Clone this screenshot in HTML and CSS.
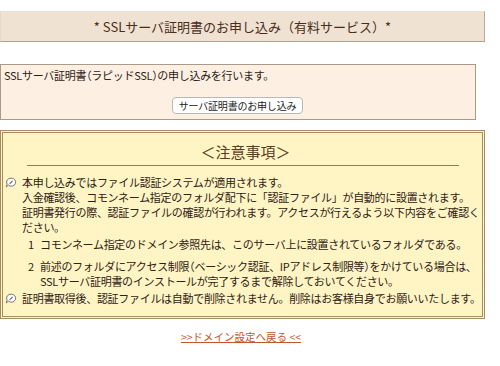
FILE: index.html
```html
<!DOCTYPE html>
<html lang="ja">
<head>
<meta charset="utf-8">
<link rel="stylesheet" href="styles.css">
</head>
<body>
<div class="page">
  <div class="title">* SSLサーバ証明書のお申し込み（有料サービス）*</div>

  <div class="intro">
    <p class="intro-text">SSLサーバ証明書<span class="paren">（</span>ラピッドSSL<span class="paren">）</span>の申し込みを行います。</p>
    <div class="intro-action"><button class="btn" type="button">サーバ証明書のお申し込み</button></div>
  </div>

  <div class="notice">
    <div class="notice-head">＜注意事項＞</div>
    <div class="rule"></div>
    <div class="item">
      <svg class="ico" viewBox="0 0 12 12" width="12" height="12"><path d="M6.5 1.2a4.3 4 0 1 1-3.1 6.9L1.2 10l.9-2.9A4.3 4 0 0 1 6.5 1.2z" fill="#fff" stroke="#777" stroke-width="1"/><path d="M4.6 6.8l3-3" stroke="#666" stroke-width="1.1"/></svg>
      <div class="item-text">本申し込みではファイル認証システムが適用されます。<br>入金確認後、コモンネーム指定のフォルダ配下に「認証ファイル」が自動的に設置されます。<br>証明書発行の際、認証ファイルの確認が行われます。アクセスが行えるよう以下内容をご確認く<br>ださい。</div>
    </div>
    <div class="num"><span class="n">1</span><span class="num-text">コモンネーム指定のドメイン参照先は、このサーバ上に設置されているフォルダである。</span></div>
    <div class="num num2"><span class="n">2</span><span class="num-text">前述のフォルダにアクセス制限<span class="paren">（</span>ベーシック認証、IPアドレス制限等<span class="paren">）</span>をかけている場合は、<br>SSLサーバ証明書のインストールが完了するまで解除しておいてください。</span></div>
    <div class="item item-last">
      <svg class="ico" viewBox="0 0 12 12" width="12" height="12"><path d="M6.5 1.2a4.3 4 0 1 1-3.1 6.9L1.2 10l.9-2.9A4.3 4 0 0 1 6.5 1.2z" fill="#fff" stroke="#777" stroke-width="1"/><path d="M4.6 6.8l3-3" stroke="#666" stroke-width="1.1"/></svg>
      <div class="item-text">証明書取得後、認証ファイルは自動で削除されません。削除はお客様自身でお願いいたします。</div>
    </div>
  </div>

  <div class="back"><a href="#" class="back-link">&gt;&gt;ドメイン設定へ戻る &lt;&lt;</a></div>
</div>
</body>
</html>
```

FILE: styles.css
```css
html, body {
  margin: 0;
  padding: 0;
  background: #ffffff;
}
body {
  font-family: "Noto Sans CJK JP", "Noto Sans", sans-serif;
  font-size: 11px;
  color: #2e2014;
}
.page {
  padding-top: 11px;
  width: 486px;
}
.title {
  box-sizing: border-box;
  width: 485px;
  height: 31px;
  background: #efe2d2;
  border: 1px solid;
  border-color: #ece3d8 #b8a898 #b0a090 #e2d8cc;
  text-align: center;
  line-height: 29px;
  font-size: 13px;
  color: #4a2c18;
}
.paren {
  font-feature-settings: "halt";
}
.intro {
  box-sizing: border-box;
  margin-top: 22px;
  width: 476px;
  height: 56px;
  background: #fdf0e3;
  border: 1px solid #a99a8a;
  padding: 3px 0 0 3px;
}
.intro-text {
  margin: 0;
  line-height: 15px;
  letter-spacing: -0.3px;
}
.intro-action {
  display: flex;
  justify-content: center;
  margin-top: 14px;
  padding-right: 4px;
}
.btn {
  font-family: inherit;
  font-size: 10px;
  line-height: 14px;
  height: 17px;
  padding: 0 6px;
  letter-spacing: -0.2px;
  background: #ffffff;
  border: 1px solid #b8b8b8;
  border-radius: 4px;
  color: #222;
}
.notice {
  box-sizing: border-box;
  margin-top: 10px;
  width: 485px;
  height: 189px;
  background: #fff5c4;
  border: 3px double #a88c62;
  padding: 10px 0 0 0;
}
.notice-head {
  text-align: center;
  font-size: 15px;
  line-height: 18px;
  color: #5a3c22;
  padding-left: 6px;
}
.rule {
  margin: 4px 0 0 24px;
  width: 432px;
  height: 1px;
  background: #9c7a4c;
}
.item {
  display: flex;
  align-items: flex-start;
  margin-top: 9px;
}
.ico {
  flex: none;
  margin: 2px 5px 0 2px;
}
.item-text {
  line-height: 15px;
  white-space: nowrap;
  letter-spacing: -0.3px;
}
.num {
  display: flex;
  margin-top: 2px;
  padding-left: 25px;
  line-height: 15px;
  white-space: nowrap;
  letter-spacing: -0.3px;
}
.num2 {
  margin-top: 7px;
}
.n {
  flex: none;
  width: 12px;
}
.item-last {
  margin-top: 2px;
}
.back {
  text-align: center;
  margin-top: 9px;
  padding-right: 4px;
}
.back-link {
  font-size: 10.5px;
  color: #c4542c;
  text-decoration: underline;
}
```
